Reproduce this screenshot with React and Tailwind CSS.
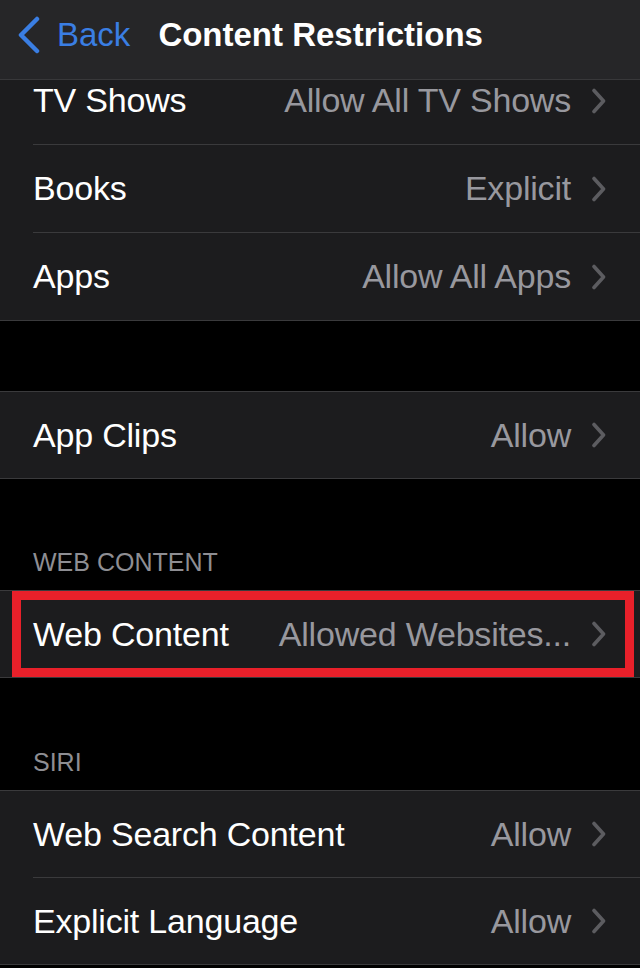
import { useState } from "react";

const font = { fontFamily: '"Liberation Sans", Arial, sans-serif' };

// Grey disclosure chevron shown at the end of every row
const Chevron = () => (
    <svg width="16" height="26" viewBox="0 0 16 26" className="shrink-0">
        <path d="M3 2.5 L12.5 13 L3 23.5" fill="none" stroke="#5c5c60" strokeWidth="3.6" strokeLinecap="round" strokeLinejoin="round" />
    </svg>
);

// height includes the inset separator line when the row is not the last one
const Row = ({ label, value, last, h = "h-[87px]" }) => (
    <div className={`flex items-stretch pl-[33px] ${h}`}>
        <div className={`flex flex-1 items-center justify-between pr-[33px] ${last ? "" : "border-b border-[#3a3a3c]"}`}>
            <span className="text-[34px] text-white tracking-[-0.2px]">{label}</span>
            <span className="flex items-center gap-[20px]">
                <span className="text-[34px] text-[#98989e] tracking-[-0.2px]">{value}</span>
                <Chevron />
            </span>
        </div>
    </div>
);

const Group = ({ children }) => (
    <div className="border-y border-[#3a3a3c] bg-[#1c1c1e]">{children}</div>
);

const SectionHeader = ({ title, tall }) => (
    <div className={`flex items-end pb-[9px] pl-[33px] text-[25px] text-[#8e8e93] ${tall ? "h-[112px]" : "h-[111px]"}`}>
        {title}
    </div>
);

const App = () => {
    const [selected] = useState("web");

    return (
        <div className="h-[968px] w-[640px] overflow-hidden bg-black" style={font}>
            {/* Navigation bar */}
            <header className="flex h-[80px] items-center border-b border-[#38383a] bg-[#262628] pb-[9px]">
                <button className="flex items-center pl-[17px] text-[#3a7ee3]">
                    <svg width="24" height="38" viewBox="0 0 24 38">
                        <path d="M20 3 L4 19 L20 35" fill="none" stroke="#3a7ee3" strokeWidth="4.5" strokeLinecap="round" strokeLinejoin="round" />
                    </svg>
                    <span className="ml-[16px] text-[33px]">Back</span>
                </button>
                <h1 className="ml-[28px] text-[33px] font-bold text-white">Content Restrictions</h1>
            </header>

            {/* Top group, scrolled under the nav bar */}
            <div className="border-b border-[#3a3a3c] bg-[#1c1c1e]">
                <div className="h-[65px] overflow-hidden">
                    <div className="-mt-[23px]">
                        <Row label="TV Shows" value="Allow All TV Shows" h="h-[88px]" />
                    </div>
                </div>
                <Row label="Books" value="Explicit" h="h-[88px]" />
                <Row label="Apps" value="Allow All Apps" last h="h-[87px]" />
            </div>

            <div className="h-[70px]" />
            <Group>
                <Row label="App Clips" value="Allow" last h="h-[86px]" />
            </Group>

            <SectionHeader title="WEB CONTENT" />
            <Group>
                <div className="relative">
                    <Row label="Web Content" value="Allowed Websites..." last h="h-[86px]" />
                    {selected === "web" && (
                        <div className="pointer-events-none absolute left-[12px] right-[6px] top-0 bottom-0 border-[9px] border-[#e8202a]" />
                    )}
                </div>
            </Group>

            <SectionHeader title="SIRI" tall />
            <Group>
                <Row label="Web Search Content" value="Allow" />
                <Row label="Explicit Language" value="Allow" last h="h-[86px]" />
            </Group>
        </div>
    );
};

export default App;
